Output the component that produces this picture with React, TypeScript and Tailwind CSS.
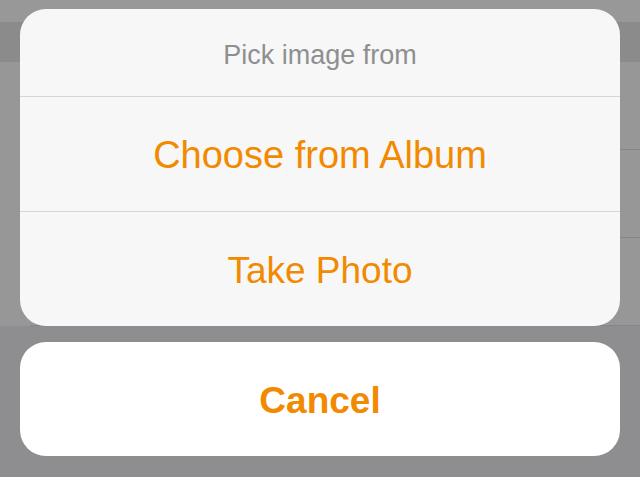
import React from 'react';

const rows = ['a', 'b', 'c'];

function App() {
  return (
    <div className="relative h-[477px] w-[640px] overflow-hidden bg-[#8e8e90] font-['Liberation_Sans','Roboto',sans-serif]">
      {/* Dimmed page underneath */}
      <div className="flex flex-col">
        <div className="h-[22px] bg-[#989898]" />
        <div className="h-[40px] bg-[#8b8b8b]" />
        <div className="flex flex-col bg-[#979797]">
          {rows.map(r => (
            <div key={r} className="h-[88px] pl-[30px]">
              <div className="h-full border-b border-[#858585]" />
            </div>
          ))}
        </div>
      </div>

      {/* Action sheet */}
      <div className="absolute inset-x-0 top-[9px] flex flex-col gap-4 px-5">
        <div className="overflow-hidden rounded-[26px] bg-[#f7f7f7]">
          <div className="flex h-[88px] items-center justify-center border-b border-[#d6d6da] pt-[5px] text-[27px] text-[#8f8f8f]">
            Pick image from
          </div>
          <div className="flex h-[115px] items-center justify-center border-b border-[#d6d6da] pt-[3px] text-[38px] text-[#f18a00]">
            Choose from Album
          </div>
          <div className="flex h-[114px] items-center justify-center pt-[3px] text-[37px] text-[#f18a00]">
            Take Photo
          </div>
        </div>
        <div className="flex h-[114px] items-center justify-center rounded-[26px] bg-white pt-[3px] text-[37px] font-bold text-[#f18a00]">
          Cancel
        </div>
      </div>
    </div>
  );
}

export default App;
